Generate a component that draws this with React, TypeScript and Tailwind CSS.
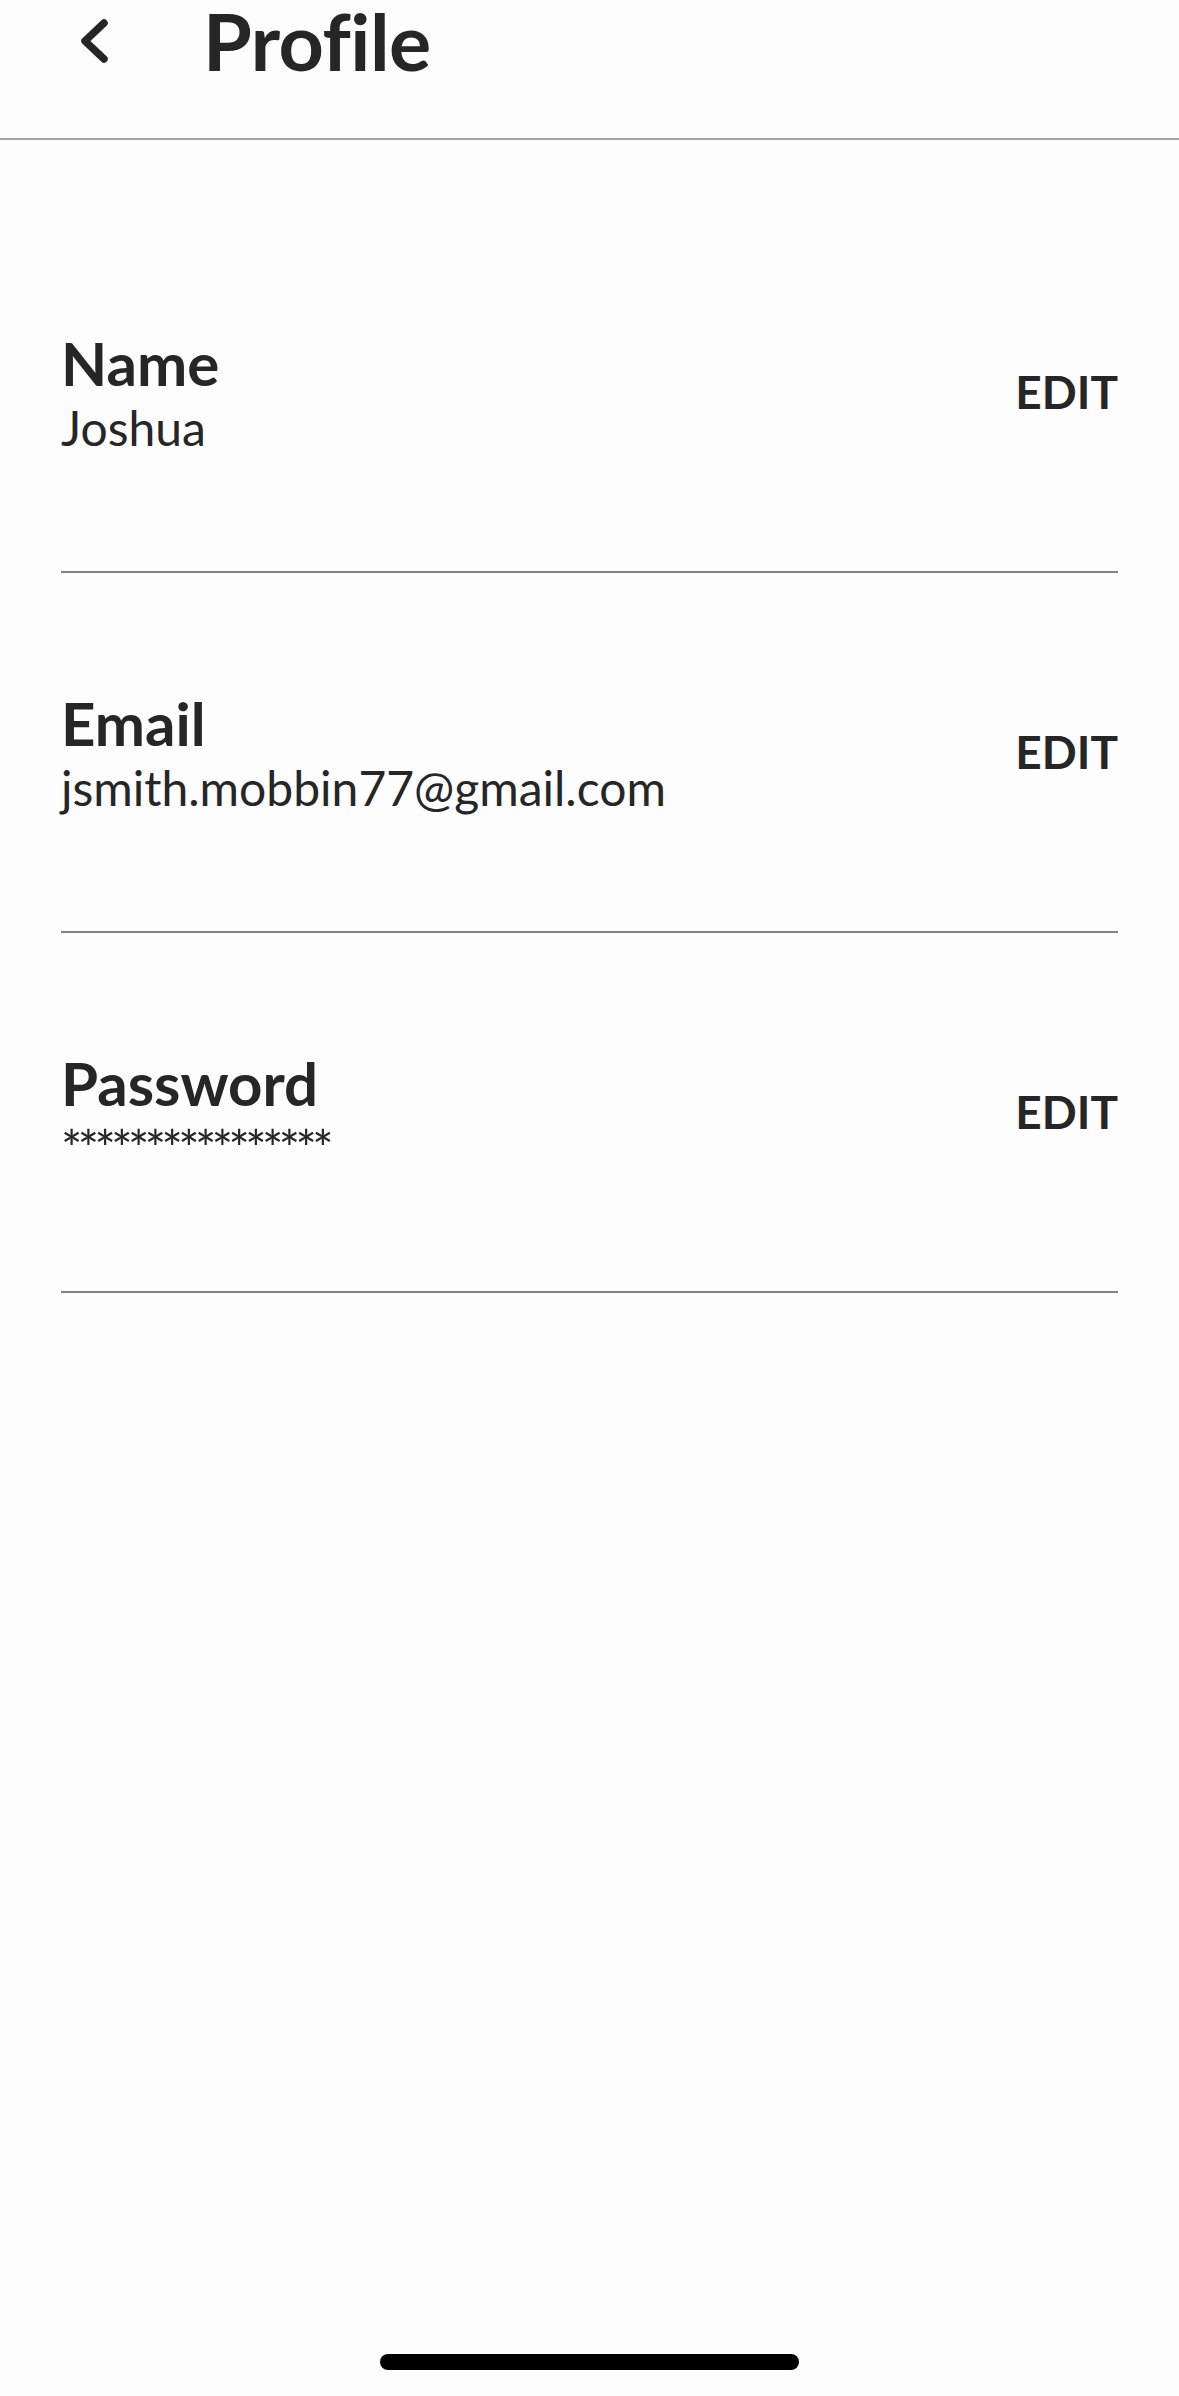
const fields = [
  { label: 'Name', value: 'Joshua' },
  { label: 'Email', value: 'jsmith.mobbin77@gmail.com' },
  { label: 'Password', value: '****************' },
]

export default function App() {
  return (
    <div
      className="min-h-screen flex flex-col bg-[#fdfdfd] text-[#262626]"
      style={{ fontFamily: 'Lato, "Noto Sans", sans-serif' }}
    >
      <header className="h-[140px] border-b-2 border-[#a3a3a3]">
        <div className="h-[82px] flex items-center">
          <button className="ml-[76px]">
            <svg width="34" height="48" viewBox="0 0 34 48" fill="none">
              <path
                d="M28 6 L9 24 L28 42"
                stroke="#262626"
                strokeWidth="7.5"
                strokeLinecap="round"
                strokeLinejoin="round"
              />
            </svg>
          </button>
          <h1 className="ml-[93px] text-[79px] font-bold leading-[82px] tracking-[-0.5px]">Profile</h1>
        </div>
      </header>

      <main className="mt-[73px] px-[61px]">
        {fields.map((f) => (
          <div
            key={f.label}
            className="h-[360px] border-b-2 border-[#8a8078] flex items-center justify-between"
          >
            <div className="flex flex-col pt-[4px]">
              <span className="text-[60px] font-bold leading-[62px]">{f.label}</span>
              <span
                className={
                  f.label === 'Password'
                    ? 'mt-[6px] text-[50px] leading-[56px] tracking-[-4.5px]'
                    : 'mt-[6px] text-[48px] leading-[56px]'
                }
              >
                {f.value}
              </span>
            </div>
            <button className="text-[46px] font-bold leading-none">EDIT</button>
          </div>
        ))}
      </main>

      <div className="flex-1 flex flex-col justify-end items-center pb-[26px]">
        <div className="w-[419px] h-[16px] rounded-full bg-black" />
      </div>
    </div>
  )
}
